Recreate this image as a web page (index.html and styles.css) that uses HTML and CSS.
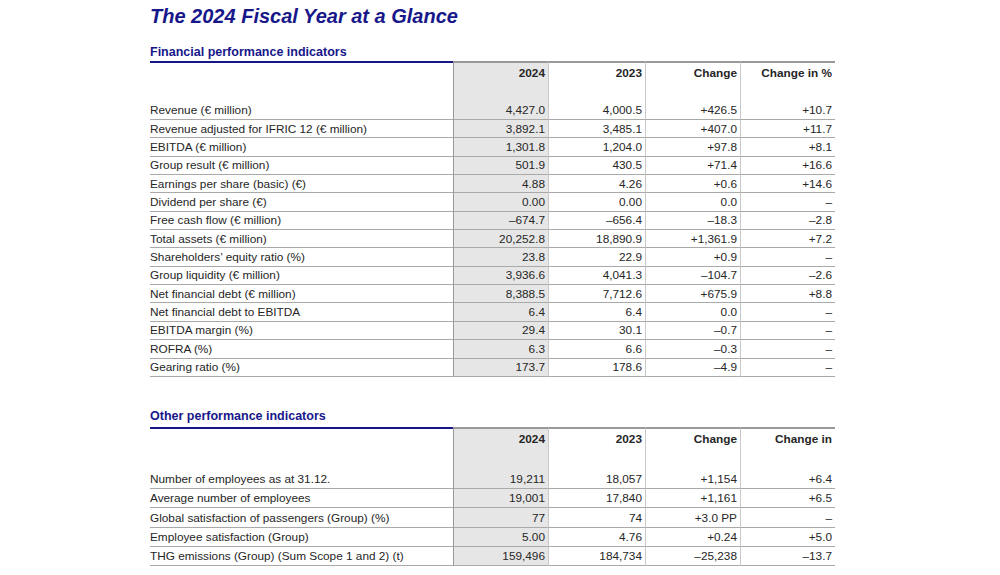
FILE: index.html
```html
<!DOCTYPE html>
<html lang="en">
<head>
<meta charset="utf-8">
<title>The 2024 Fiscal Year at a Glance</title>
<link rel="stylesheet" href="styles.css">
</head>
<body>
<main class="page">
  <h1 class="title">The 2024 Fiscal Year at a Glance</h1>

  <section class="block block-fin">
    <h2 class="section-title">Financial performance indicators</h2>
    <div class="table t1">
      <div class="row head">
        <div class="cell label"></div>
        <div class="cell num y24">2024</div>
        <div class="cell num">2023</div>
        <div class="cell num">Change</div>
        <div class="cell num">Change in %</div>
      </div>
      <div class="row"><div class="cell label">Revenue (€ million)</div><div class="cell num y24">4,427.0</div><div class="cell num">4,000.5</div><div class="cell num">+426.5</div><div class="cell num">+10.7</div></div>
      <div class="row"><div class="cell label">Revenue adjusted for IFRIC 12 (€ million)</div><div class="cell num y24">3,892.1</div><div class="cell num">3,485.1</div><div class="cell num">+407.0</div><div class="cell num">+11.7</div></div>
      <div class="row"><div class="cell label">EBITDA (€ million)</div><div class="cell num y24">1,301.8</div><div class="cell num">1,204.0</div><div class="cell num">+97.8</div><div class="cell num">+8.1</div></div>
      <div class="row"><div class="cell label">Group result (€ million)</div><div class="cell num y24">501.9</div><div class="cell num">430.5</div><div class="cell num">+71.4</div><div class="cell num">+16.6</div></div>
      <div class="row"><div class="cell label">Earnings per share (basic) (€)</div><div class="cell num y24">4.88</div><div class="cell num">4.26</div><div class="cell num">+0.6</div><div class="cell num">+14.6</div></div>
      <div class="row"><div class="cell label">Dividend per share (€)</div><div class="cell num y24">0.00</div><div class="cell num">0.00</div><div class="cell num">0.0</div><div class="cell num">–</div></div>
      <div class="row"><div class="cell label">Free cash flow (€ million)</div><div class="cell num y24">–674.7</div><div class="cell num">–656.4</div><div class="cell num">–18.3</div><div class="cell num">–2.8</div></div>
      <div class="row"><div class="cell label">Total assets (€ million)</div><div class="cell num y24">20,252.8</div><div class="cell num">18,890.9</div><div class="cell num">+1,361.9</div><div class="cell num">+7.2</div></div>
      <div class="row"><div class="cell label">Shareholders’ equity ratio (%)</div><div class="cell num y24">23.8</div><div class="cell num">22.9</div><div class="cell num">+0.9</div><div class="cell num">–</div></div>
      <div class="row"><div class="cell label">Group liquidity (€ million)</div><div class="cell num y24">3,936.6</div><div class="cell num">4,041.3</div><div class="cell num">–104.7</div><div class="cell num">–2.6</div></div>
      <div class="row"><div class="cell label">Net financial debt (€ million)</div><div class="cell num y24">8,388.5</div><div class="cell num">7,712.6</div><div class="cell num">+675.9</div><div class="cell num">+8.8</div></div>
      <div class="row"><div class="cell label">Net financial debt to EBITDA</div><div class="cell num y24">6.4</div><div class="cell num">6.4</div><div class="cell num">0.0</div><div class="cell num">–</div></div>
      <div class="row"><div class="cell label">EBITDA margin (%)</div><div class="cell num y24">29.4</div><div class="cell num">30.1</div><div class="cell num">–0.7</div><div class="cell num">–</div></div>
      <div class="row"><div class="cell label">ROFRA (%)</div><div class="cell num y24">6.3</div><div class="cell num">6.6</div><div class="cell num">–0.3</div><div class="cell num">–</div></div>
      <div class="row"><div class="cell label">Gearing ratio (%)</div><div class="cell num y24">173.7</div><div class="cell num">178.6</div><div class="cell num">–4.9</div><div class="cell num">–</div></div>
    </div>
  </section>

  <section class="block block-other">
    <h2 class="section-title">Other performance indicators</h2>
    <div class="table t2">
      <div class="row head">
        <div class="cell label"></div>
        <div class="cell num y24">2024</div>
        <div class="cell num">2023</div>
        <div class="cell num">Change</div>
        <div class="cell num">Change in</div>
      </div>
      <div class="row"><div class="cell label">Number of employees as at 31.12.</div><div class="cell num y24">19,211</div><div class="cell num">18,057</div><div class="cell num">+1,154</div><div class="cell num">+6.4</div></div>
      <div class="row"><div class="cell label">Average number of employees</div><div class="cell num y24">19,001</div><div class="cell num">17,840</div><div class="cell num">+1,161</div><div class="cell num">+6.5</div></div>
      <div class="row"><div class="cell label">Global satisfaction of passengers (Group) (%)</div><div class="cell num y24">77</div><div class="cell num">74</div><div class="cell num">+3.0 PP</div><div class="cell num">–</div></div>
      <div class="row"><div class="cell label">Employee satisfaction (Group)</div><div class="cell num y24">5.00</div><div class="cell num">4.76</div><div class="cell num">+0.24</div><div class="cell num">+5.0</div></div>
      <div class="row"><div class="cell label">THG emissions (Group) (Sum Scope 1 and 2) (t)</div><div class="cell num y24">159,496</div><div class="cell num">184,734</div><div class="cell num">–25,238</div><div class="cell num">–13.7</div></div>
    </div>
  </section>
</main>
</body>
</html>
```

FILE: styles.css
```css
* { box-sizing: border-box; }

html, body {
  margin: 0;
  padding: 0;
  background: #ffffff;
}

body {
  font-family: "Liberation Sans", Arial, sans-serif;
  color: #262626;
}

.page {
  padding: 4px 0 0 150px;
  width: 1000px;
}

.title {
  margin: 0;
  font-size: 20px;
  line-height: 24px;
  font-weight: bold;
  font-style: italic;
  color: #17178a;
}

.section-title {
  margin: 0;
  font-size: 12.5px;
  line-height: 14px;
  font-weight: bold;
  color: #17178a;
  padding-bottom: 2px;
}

.block-fin { margin-top: 17px; }
.block-other { margin-top: 32px; }
.block-other .section-title { padding-bottom: 4px; }

.table {
  width: 685px;
  display: flex;
  flex-direction: column;
}

.row {
  display: grid;
  grid-template-columns: 303px 95px 97px 95px 95px;
  font-size: 11.8px;
}

.t1 .row { height: 18.36px; }
.t2 .row { height: 19.25px; }

.row .cell {
  border-bottom: 1px solid #a9a9a9;
  display: flex;
  align-items: center;
  white-space: nowrap;
  overflow: hidden;
}

.row .cell.num {
  justify-content: flex-end;
  padding-right: 3px;
  border-left: 1px solid #c9c9c9;
}

.row .cell.y24 {
  background: #e6e6e6;
  border-left-color: #9a9a9a;
}

.row .cell.label { padding-left: 0; }

.row.head { font-weight: bold; }
.t1 .row.head { height: 40.5px; }
.t2 .row.head { height: 43px; }

.row.head .cell {
  align-items: flex-start;
  padding-top: 3px;
  border-bottom: none;
  border-top: 2px solid #999999;
}

.row.head .cell.label {
  border-top: 2px solid #17178a;
}
```
